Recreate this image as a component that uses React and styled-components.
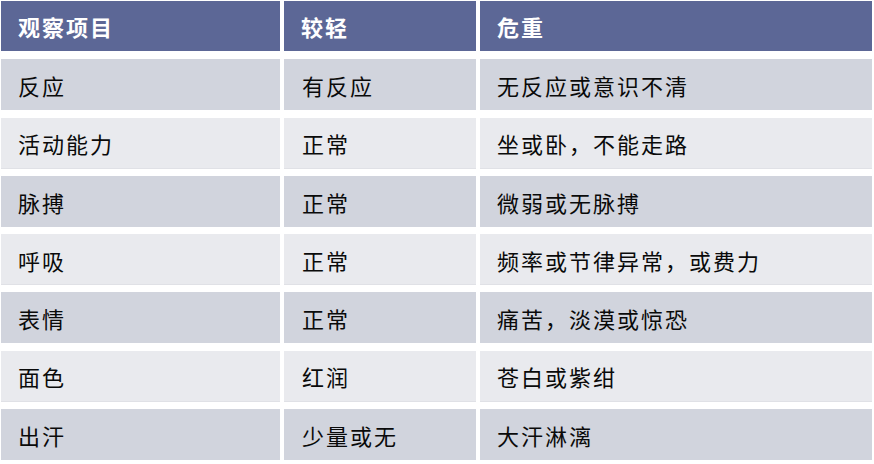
import { createGlobalStyle } from "styled-components";
import styled from "styled-components";

const GlobalStyle = createGlobalStyle`
  html, body {
    margin: 0;
    padding: 0;
    background: #ffffff;
  }
  body {
    font-family: "Noto Sans CJK SC", "Noto Sans", sans-serif;
  }
`;

const Table = styled.div`
  display: grid;
  grid-template-columns: 279px 192px 392px;
  grid-template-rows: 51px repeat(7, 51px);
  column-gap: 4px;
  row-gap: 7.3px;
  padding: 1px 2px 0 1px;
  width: 874px;
  box-sizing: border-box;
  & > :nth-child(-n + 3) {
    margin-bottom: 0.7px;
  }
`;

const HeadCell = styled.div`
  background: #5c6796;
  color: #ffffff;
  font-weight: 700;
  font-size: 22px;
  letter-spacing: 2px;
  display: flex;
  align-items: center;
  padding-left: 17px;
  padding-bottom: 1px;
`;

const Cell = styled.div`
  background: ${(p) => (p.$dark ? "#d1d4dd" : "#e9eaee")};
  color: #0a0a0a;
  font-size: 22px;
  letter-spacing: 2px;
  display: flex;
  align-items: center;
  padding-left: ${(p) => p.$pad || 17}px;
  padding-top: 1px;
  border-bottom: ${(p) => (p.$dark ? "none" : "1px solid #e0e1e6")};
`;

const rows = [
  ["反应", "有反应", "无反应或意识不清"],
  ["活动能力", "正常", "坐或卧，不能走路"],
  ["脉搏", "正常", "微弱或无脉搏"],
  ["呼吸", "正常", "频率或节律异常，或费力"],
  ["表情", "正常", "痛苦，淡漠或惊恐"],
  ["面色", "红润", "苍白或紫绀"],
  ["出汗", "少量或无", "大汗淋漓"],
];

export default function App() {
  return (
    <>
      <GlobalStyle />
      <Table>
        <HeadCell>观察项目</HeadCell>
        <HeadCell>较轻</HeadCell>
        <HeadCell>危重</HeadCell>
        {rows.map((r, i) =>
          r.map((t, j) => (
            <Cell key={i + "-" + j} $dark={i % 2 === 0} $pad={j === 1 ? 18 : 17}>
              {t}
            </Cell>
          ))
        )}
      </Table>
    </>
  );
}
